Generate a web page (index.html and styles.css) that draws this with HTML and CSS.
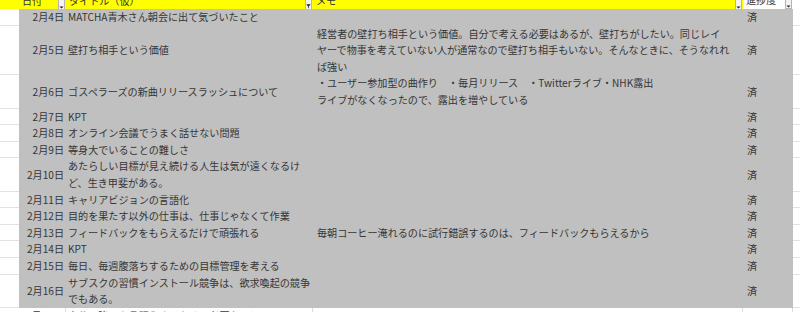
FILE: index.html
```html
<!DOCTYPE html>
<html lang="ja">
<head>
<meta charset="utf-8">
<link rel="stylesheet" href="styles.css">
</head>
<body>
<div class="sheet">
  <div class="row hdr">
    <div class="h yel"></div>
    <div class="h yel"><span class="ht">日付</span><span class="fb"><svg width="6" height="12" viewBox="0 0 6 12"><path d="M0.5 9 L5.5 9 L3 11.5 Z" fill="#222"/></svg></span></div>
    <div class="h yel"><span class="ht">タイトル（仮）</span><span class="fb"><svg width="7" height="12" viewBox="0 0 7 12"><path d="M0.5 6.5 L6.5 6.5 L4 9.5 L4 12 L3 12 L3 9.5 Z" fill="#222"/></svg></span></div>
    <div class="h yel"><span class="ht">メモ</span><span class="fb"><svg width="6" height="12" viewBox="0 0 6 12"><path d="M0.5 9 L5.5 9 L3 11.5 Z" fill="#222"/></svg></span></div>
    <div class="h wht"><span class="ht">進捗度</span><span class="fb"><svg width="6" height="12" viewBox="0 0 6 12"><path d="M0.5 9 L5.5 9 L3 11.5 Z" fill="#222"/></svg></span></div>
    <div class="h wht"></div>
  </div>

  <div class="row"><div class="w"></div><div class="c d">2月4日</div><div class="c t">MATCHA青木さん朝会に出て気づいたこと</div><div class="c m"></div><div class="c s">済</div><div class="w"></div></div>
  <div class="row"><div class="w"></div><div class="c d">2月5日</div><div class="c t">壁打ち相手という価値</div><div class="c m">経営者の壁打ち相手という価値。自分で考える必要はあるが、壁打ちがしたい。同じレイ<br>ヤーで物事を考えていない人が通常なので壁打ち相手もいない。そんなときに、そうなれれ<br>ば強い</div><div class="c s">済</div><div class="w"></div></div>
  <div class="row"><div class="w"></div><div class="c d">2月6日</div><div class="c t">ゴスペラーズの新曲リリースラッシュについて</div><div class="c m">・ユーザー参加型の曲作り　・毎月リリース　・Twitterライブ・NHK露出<br>ライブがなくなったので、露出を増やしている</div><div class="c s">済</div><div class="w"></div></div>
  <div class="row"><div class="w"></div><div class="c d">2月7日</div><div class="c t">KPT</div><div class="c m"></div><div class="c s">済</div><div class="w"></div></div>
  <div class="row"><div class="w"></div><div class="c d">2月8日</div><div class="c t">オンライン会議でうまく話せない問題</div><div class="c m"></div><div class="c s">済</div><div class="w"></div></div>
  <div class="row"><div class="w"></div><div class="c d">2月9日</div><div class="c t">等身大でいることの難しさ</div><div class="c m"></div><div class="c s">済</div><div class="w"></div></div>
  <div class="row"><div class="w"></div><div class="c d">2月10日</div><div class="c t">あたらしい目標が見え続ける人生は気が遠くなるけ<br>ど、生き甲斐がある。</div><div class="c m"></div><div class="c s">済</div><div class="w"></div></div>
  <div class="row"><div class="w"></div><div class="c d">2月11日</div><div class="c t">キャリアビジョンの言語化</div><div class="c m"></div><div class="c s">済</div><div class="w"></div></div>
  <div class="row"><div class="w"></div><div class="c d">2月12日</div><div class="c t">目的を果たす以外の仕事は、仕事じゃなくて作業</div><div class="c m"></div><div class="c s">済</div><div class="w"></div></div>
  <div class="row"><div class="w"></div><div class="c d">2月13日</div><div class="c t">フィードバックをもらえるだけで頑張れる</div><div class="c m">毎朝コーヒー淹れるのに試行錯誤するのは、フィードバックもらえるから</div><div class="c s">済</div><div class="w"></div></div>
  <div class="row"><div class="w"></div><div class="c d">2月14日</div><div class="c t">KPT</div><div class="c m"></div><div class="c s">済</div><div class="w"></div></div>
  <div class="row"><div class="w"></div><div class="c d">2月15日</div><div class="c t">毎日、毎週腹落ちするための目標管理を考える</div><div class="c m"></div><div class="c s">済</div><div class="w"></div></div>
  <div class="row"><div class="w"></div><div class="c d">2月16日</div><div class="c t">サブスクの習慣インストール競争は、欲求喚起の競争<br>でもある。</div><div class="c m"></div><div class="c s">済</div><div class="w"></div></div>
  <div class="row"><div class="w"></div><div class="wc d">2月17日</div><div class="wc t">自分の強みを言語化するために必要なこと</div><div class="wc m"></div><div class="wc s"></div><div class="w"></div></div>
</div>
</body>
</html>
```
FILE: styles.css
```css
html, body {
  margin: 0;
  padding: 0;
  background: #ffffff;
  overflow: hidden;
}
body {
  font-family: "Noto Sans CJK JP", "Noto Sans", sans-serif;
  font-size: 10.1px;
  color: #363636;
}
.sheet {
  margin-top: -8px;
}
.row {
  display: grid;
  grid-template-columns: 19px 47px 247px 430px 50px 1fr;
  line-height: 16.6px;
}
.hdr {
  height: 17px;
}
.h {
  display: flex;
  justify-content: space-between;
  align-items: flex-end;
  box-sizing: border-box;
  padding: 0 1px 1px 3px;
}
.yel {
  background: #ffff00;
}
.wht {
  background: #ffffff;
  border-bottom: 1px solid #dcdcdc;
}
.ht {
  align-self: center;
  white-space: nowrap;
  color: #333;
}
.fb {
  display: flex;
  justify-content: center;
  width: 7px;
  height: 13px;
  box-sizing: border-box;
  border: 1px solid #b4b4b4;
  background: #f3f3f3;
  overflow: hidden;
}
.w {
  background: #ffffff;
  border-bottom: 1px solid #e2e2e2;
  box-sizing: border-box;
}
.c {
  background: #c0c0c0;
  display: flex;
  flex-direction: column;
  justify-content: center;
  white-space: nowrap;
}
.wc {
  background: #ffffff;
  border-right: 1px solid #dcdcdc;
  box-sizing: border-box;
  white-space: nowrap;
}
.d {
  text-align: right;
  padding-right: 2px;
}
.t {
  padding-left: 2px;
}
.m {
  padding-left: 4px;
}
.s {
  padding-left: 4px;
}
```
